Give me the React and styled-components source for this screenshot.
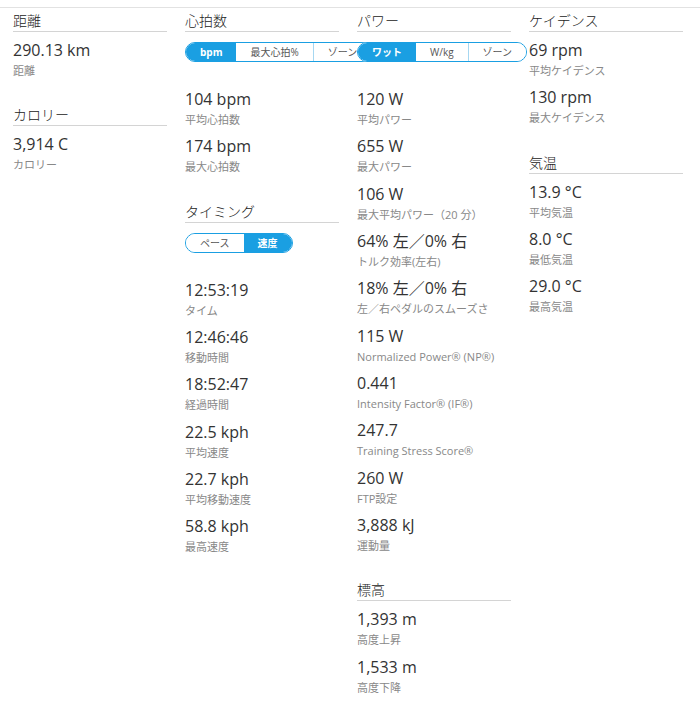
import React from "react";
import styled, { createGlobalStyle } from "styled-components";

const GlobalStyle = createGlobalStyle`
  html, body {
    margin: 0;
    padding: 0;
    background: #ffffff;
  }
  body {
    font-family: "Open Sans", "Noto Sans CJK JP", sans-serif;
    color: #333333;
  }
`;

const BLUE = "#1a9fe2";

const Page = styled.div`
  margin-top: 7px;
  border-top: 1px solid #e2e2e2;
  padding: 3px 13px 0 13px;
  display: grid;
  grid-template-columns: repeat(4, 154px);
  column-gap: 18px;
  align-items: start;
`;

const Column = styled.div`
  display: flex;
  flex-direction: column;
  min-width: 0;
`;

const Section = styled.section`
  display: flex;
  flex-direction: column;
  & + & {
    margin-top: ${(p) => p.$spacing ?? 20}px;
  }
`;

const Heading = styled.h3`
  margin: 0 0 7px 0;
  font-size: 14px;
  line-height: 20px;
  font-weight: 300;
  color: #222222;
  border-bottom: 1px solid #d4d4d4;
`;

const Toggle = styled.div`
  display: flex;
  width: max-content;
  height: 18px;
  margin: 3px 0 26px 0;
  border: 1px solid ${BLUE};
  border-radius: 10px;
  overflow: hidden;
  background: #ffffff;
`;

const Segment = styled.button`
  all: unset;
  box-sizing: border-box;
  display: flex;
  align-items: center;
  justify-content: center;
  height: 18px;
  padding: 0 14px;
  font-family: "Open Sans", "Noto Sans CJK JP", sans-serif;
  font-size: 10px;
  line-height: 18px;
  white-space: nowrap;
  font-weight: ${(p) => (p.$active ? 700 : 400)};
  color: ${(p) => (p.$active ? "#ffffff" : "#555555")};
  background: ${(p) => (p.$active ? BLUE : "#ffffff")};
  border-left: ${(p) => (p.$divider ? "1px solid #a6d7f1" : "none")};
`;

const Item = styled.div`
  display: flex;
  flex-direction: column;
  padding-bottom: 5.33px;
`;

const Value = styled.div`
  font-size: 16px;
  line-height: 22px;
  color: #333333;
  white-space: nowrap;
`;

const Label = styled.div`
  font-size: 11px;
  line-height: 20px;
  color: #888888;
  white-space: nowrap;
`;

const columns = [
  [
    { title: "距離", items: [["290.13 km", "距離"]] },
    { title: "カロリー", items: [["3,914 C", "カロリー"]] },
  ],
  [
    {
      title: "心拍数",
      toggle: { options: ["bpm", "最大心拍%", "ゾーン"], active: 0 },
      items: [
        ["104 bpm", "平均心拍数"],
        ["174 bpm", "最大心拍数"],
      ],
    },
    {
      title: "タイミング",
      spacing: 18,
      toggle: { options: ["ペース", "速度"], active: 1 },
      items: [
        ["12:53:19", "タイム"],
        ["12:46:46", "移動時間"],
        ["18:52:47", "経過時間"],
        ["22.5 kph", "平均速度"],
        ["22.7 kph", "平均移動速度"],
        ["58.8 kph", "最高速度"],
      ],
    },
  ],
  [
    {
      title: "パワー",
      toggle: { options: ["ワット", "W/kg", "ゾーン"], active: 0 },
      items: [
        ["120 W", "平均パワー"],
        ["655 W", "最大パワー"],
        ["106 W", "最大平均パワー（20 分）"],
        ["64% 左／0% 右", "トルク効率(左右)"],
        ["18% 左／0% 右", "左／右ペダルのスムーズさ"],
        ["115 W", "Normalized Power® (NP®)"],
        ["0.441", "Intensity Factor® (IF®)"],
        ["247.7", "Training Stress Score®"],
        ["260 W", "FTP設定"],
        ["3,888 kJ", "運動量"],
      ],
    },
    {
      title: "標高",
      items: [
        ["1,393 m", "高度上昇"],
        ["1,533 m", "高度下降"],
      ],
    },
  ],
  [
    {
      title: "ケイデンス",
      items: [
        ["69 rpm", "平均ケイデンス"],
        ["130 rpm", "最大ケイデンス"],
      ],
    },
    {
      title: "気温",
      spacing: 19,
      items: [
        ["13.9 °C", "平均気温"],
        ["8.0 °C", "最低気温"],
        ["29.0 °C", "最高気温"],
      ],
    },
  ],
];

function SegmentToggle({ options, active }) {
  return (
    <Toggle>
      {options.map((opt, i) => (
        <Segment
          key={opt}
          $active={i === active}
          $divider={i > 0 && i !== active && i - 1 !== active}
        >
          {opt}
        </Segment>
      ))}
    </Toggle>
  );
}

export default function App() {
  return (
    <>
      <GlobalStyle />
      <Page>
        {columns.map((sections, ci) => (
          <Column key={ci}>
            {sections.map((s) => (
              <Section key={s.title} $spacing={s.spacing}>
                <Heading>{s.title}</Heading>
                {s.toggle && <SegmentToggle {...s.toggle} />}
                {s.items.map(([v, l]) => (
                  <Item key={l}>
                    <Value>{v}</Value>
                    <Label>{l}</Label>
                  </Item>
                ))}
              </Section>
            ))}
          </Column>
        ))}
      </Page>
    </>
  );
}
